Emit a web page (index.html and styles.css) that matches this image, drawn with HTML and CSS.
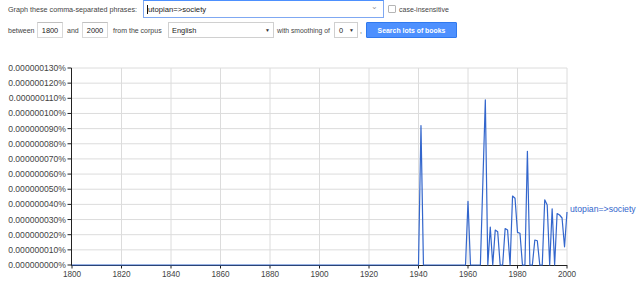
FILE: index.html
```html
<!DOCTYPE html>
<html>
<head>
<meta charset="utf-8">
<link rel="stylesheet" href="styles.css">
</head>
<body>
<div class="form">
  <div class="row row1">
    <span class="lbl lbl-phrases">Graph these comma-separated phrases:</span>
    <div class="box phrase"><span class="caret"></span><span class="val">utopian=&gt;society</span><span class="chev">&#8964;</span></div>
    <span class="check"></span>
    <span class="lbl">case-insensitive</span>
  </div>
  <div class="row row2">
    <span class="lbl w-between">between</span>
    <div class="box year">1800</div>
    <span class="lbl w-and">and</span>
    <div class="box year">2000</div>
    <span class="lbl w-from">from the corpus</span>
    <div class="box sel corpus"><span>English</span><span class="arr">&#9660;</span></div>
    <span class="lbl w-with">with smoothing of</span>
    <div class="box sel smooth"><span>0</span><span class="arr">&#9660;</span></div>
    <span class="lbl w-comma">,</span>
    <div class="btn">Search lots of books</div>
  </div>
</div>
<svg class="chart" width="640" height="234" viewBox="0 50 640 234">
  <g class="grid">
    <line x1="72" y1="68" x2="567" y2="68"/>
    <line x1="72" y1="83.15" x2="567" y2="83.15"/>
    <line x1="72" y1="98.31" x2="567" y2="98.31"/>
    <line x1="72" y1="113.46" x2="567" y2="113.46"/>
    <line x1="72" y1="128.61" x2="567" y2="128.61"/>
    <line x1="72" y1="143.77" x2="567" y2="143.77"/>
    <line x1="72" y1="158.92" x2="567" y2="158.92"/>
    <line x1="72" y1="174.08" x2="567" y2="174.08"/>
    <line x1="72" y1="189.23" x2="567" y2="189.23"/>
    <line x1="72" y1="204.38" x2="567" y2="204.38"/>
    <line x1="72" y1="219.54" x2="567" y2="219.54"/>
    <line x1="72" y1="234.69" x2="567" y2="234.69"/>
    <line x1="72" y1="249.85" x2="567" y2="249.85"/>
    <line x1="121.5" y1="68" x2="121.5" y2="265"/>
    <line x1="171" y1="68" x2="171" y2="265"/>
    <line x1="220.5" y1="68" x2="220.5" y2="265"/>
    <line x1="270" y1="68" x2="270" y2="265"/>
    <line x1="319.5" y1="68" x2="319.5" y2="265"/>
    <line x1="369" y1="68" x2="369" y2="265"/>
    <line x1="418.5" y1="68" x2="418.5" y2="265"/>
    <line x1="468" y1="68" x2="468" y2="265"/>
    <line x1="517.5" y1="68" x2="517.5" y2="265"/>
    <line x1="567" y1="68" x2="567" y2="265"/>
  </g>
  <g class="axis">
    <line x1="71.5" y1="68" x2="71.5" y2="265.5"/>
    <line x1="71.5" y1="265.5" x2="567" y2="265.5"/>
    <line x1="67.5" y1="68" x2="71.5" y2="68"/>
    <line x1="67.5" y1="83.15" x2="71.5" y2="83.15"/>
    <line x1="67.5" y1="98.31" x2="71.5" y2="98.31"/>
    <line x1="67.5" y1="113.46" x2="71.5" y2="113.46"/>
    <line x1="67.5" y1="128.61" x2="71.5" y2="128.61"/>
    <line x1="67.5" y1="143.77" x2="71.5" y2="143.77"/>
    <line x1="67.5" y1="158.92" x2="71.5" y2="158.92"/>
    <line x1="67.5" y1="174.08" x2="71.5" y2="174.08"/>
    <line x1="67.5" y1="189.23" x2="71.5" y2="189.23"/>
    <line x1="67.5" y1="204.38" x2="71.5" y2="204.38"/>
    <line x1="67.5" y1="219.54" x2="71.5" y2="219.54"/>
    <line x1="67.5" y1="234.69" x2="71.5" y2="234.69"/>
    <line x1="67.5" y1="249.85" x2="71.5" y2="249.85"/>
    <line x1="67.5" y1="265" x2="71.5" y2="265"/>
    <line x1="72" y1="265" x2="72" y2="268.5"/>
    <line x1="121.5" y1="265" x2="121.5" y2="268.5"/>
    <line x1="171" y1="265" x2="171" y2="268.5"/>
    <line x1="220.5" y1="265" x2="220.5" y2="268.5"/>
    <line x1="270" y1="265" x2="270" y2="268.5"/>
    <line x1="319.5" y1="265" x2="319.5" y2="268.5"/>
    <line x1="369" y1="265" x2="369" y2="268.5"/>
    <line x1="418.5" y1="265" x2="418.5" y2="268.5"/>
    <line x1="468" y1="265" x2="468" y2="268.5"/>
    <line x1="517.5" y1="265" x2="517.5" y2="268.5"/>
    <line x1="567" y1="265" x2="567" y2="268.5"/>
  </g>
  <g class="ylab">
    <text x="66" y="71">0.000000130%</text>
    <text x="66" y="86.15">0.000000120%</text>
    <text x="66" y="101.31">0.000000110%</text>
    <text x="66" y="116.46">0.000000100%</text>
    <text x="66" y="131.61">0.000000090%</text>
    <text x="66" y="146.77">0.000000080%</text>
    <text x="66" y="161.92">0.000000070%</text>
    <text x="66" y="177.08">0.000000060%</text>
    <text x="66" y="192.23">0.000000050%</text>
    <text x="66" y="207.38">0.000000040%</text>
    <text x="66" y="222.54">0.000000030%</text>
    <text x="66" y="237.69">0.000000020%</text>
    <text x="66" y="252.85">0.000000010%</text>
    <text x="66" y="268">0.000000000%</text>
  </g>
  <g class="xlab">
    <text x="72" y="277">1800</text>
    <text x="121.5" y="277">1820</text>
    <text x="171" y="277">1840</text>
    <text x="220.5" y="277">1860</text>
    <text x="270" y="277">1880</text>
    <text x="319.5" y="277">1900</text>
    <text x="369" y="277">1920</text>
    <text x="418.5" y="277">1940</text>
    <text x="468" y="277">1960</text>
    <text x="517.5" y="277">1980</text>
    <text x="567" y="277">2000</text>
  </g>
  <polyline class="series" points="72,265 418.5,265 420.98,125.6 423.45,265 465.53,265 468,201.35 470.48,265 480.38,265 482.85,182.4 485.33,99.8 487.8,265 490.28,227.1 492.75,265 495.23,230.1 497.7,231.7 500.18,265 502.65,265 505.13,228.6 507.6,230.1 510.08,265 512.55,196.05 515.03,198.3 517.5,232.4 519.98,233.2 522.45,265 524.93,265 527.4,151.3 529.88,265 532.35,265 534.83,240 537.3,240.75 539.78,265 542.25,265 544.73,199.8 547.2,205.1 549.68,265 552.15,208.9 554.63,265 557.1,213.5 559.58,215 562.05,218 564.53,246.8 567,212"/>
  <text class="legend" x="570" y="212">utopian=&gt;society</text>
</svg>
</body>
</html>
```

FILE: styles.css
```css
html, body {
  margin: 0;
  padding: 0;
  background: #fff;
}
body {
  width: 640px;
  height: 284px;
  overflow: hidden;
  font-family: "Liberation Sans", Arial, sans-serif;
}
.form {
  display: flex;
  flex-direction: column;
  padding-left: 8px;
}
.row {
  display: flex;
  align-items: center;
}
.row > * {
  flex-shrink: 0;
}
.row1 {
  height: 18px;
}
.row2 {
  height: 16px;
  margin-top: 4px;
}
.lbl {
  font-size: 7px;
  color: #444;
  white-space: nowrap;
}
.lbl-phrases {
  width: 135px;
  font-size: 7.2px;
}
.box {
  box-sizing: border-box;
  border: 1px solid #d9d9d9;
  border-top-color: #c0c0c0;
  background: #fff;
  font-size: 7.4px;
  color: #222;
  display: flex;
  align-items: center;
}
.phrase {
  width: 241px;
  height: 18px;
  border-color: #7fa8f2;
  border-top-color: #4d90fe;
  padding-left: 3px;
  position: relative;
}
.caret {
  width: 1px;
  height: 9px;
  background: #111;
}
.val {
  font-size: 7.7px;
  color: #222;
}
.chev {
  position: absolute;
  right: 5px;
  top: 1px;
  font-size: 8px;
  color: #999;
}
.check {
  box-sizing: border-box;
  width: 8px;
  height: 8px;
  border: 1px solid #b5b5b5;
  border-radius: 1px;
  margin-left: 4px;
  margin-right: 3px;
}
.w-between {
  width: 29px;
}
.year {
  width: 26px;
  height: 16px;
  justify-content: center;
}
.w-and {
  width: 15px;
  margin-left: 4px;
}
.w-from {
  width: 55px;
  margin-left: 5px;
}
.sel {
  height: 16px;
  justify-content: space-between;
  padding: 0 3px;
  border-color: #d0d0d0;
}
.corpus {
  width: 106px;
}
.smooth {
  width: 24px;
  padding-left: 4px;
}
.arr {
  font-size: 5px;
  color: #333;
}
.w-with {
  width: 57px;
  margin-left: 3px;
  font-size: 6.8px;
}
.w-comma {
  width: 6px;
  margin-left: 2px;
}
.btn {
  box-sizing: border-box;
  width: 91px;
  height: 16px;
  background: #4d90fe;
  border: 1px solid #3079ed;
  border-radius: 1px;
  color: #fff;
  font-weight: bold;
  font-size: 6.9px;
  display: flex;
  align-items: center;
  justify-content: center;
}
.chart {
  display: block;
  position: absolute;
  left: 0;
  top: 50px;
}
.grid line {
  stroke: #dcdcdc;
  stroke-width: 1;
}
.axis line {
  stroke: #222;
  stroke-width: 1;
}
.ylab text {
  font-family: "Liberation Sans", Arial, sans-serif;
  font-size: 8.6px;
  fill: #444;
  text-anchor: end;
}
.xlab text {
  font-family: "Liberation Sans", Arial, sans-serif;
  font-size: 8.2px;
  fill: #444;
  text-anchor: middle;
}
.series {
  fill: none;
  stroke: #3366cc;
  stroke-width: 1.2;
  stroke-linejoin: round;
}
.legend {
  font-family: "Liberation Sans", Arial, sans-serif;
  font-size: 8.7px;
  fill: #3366cc;
}
```
